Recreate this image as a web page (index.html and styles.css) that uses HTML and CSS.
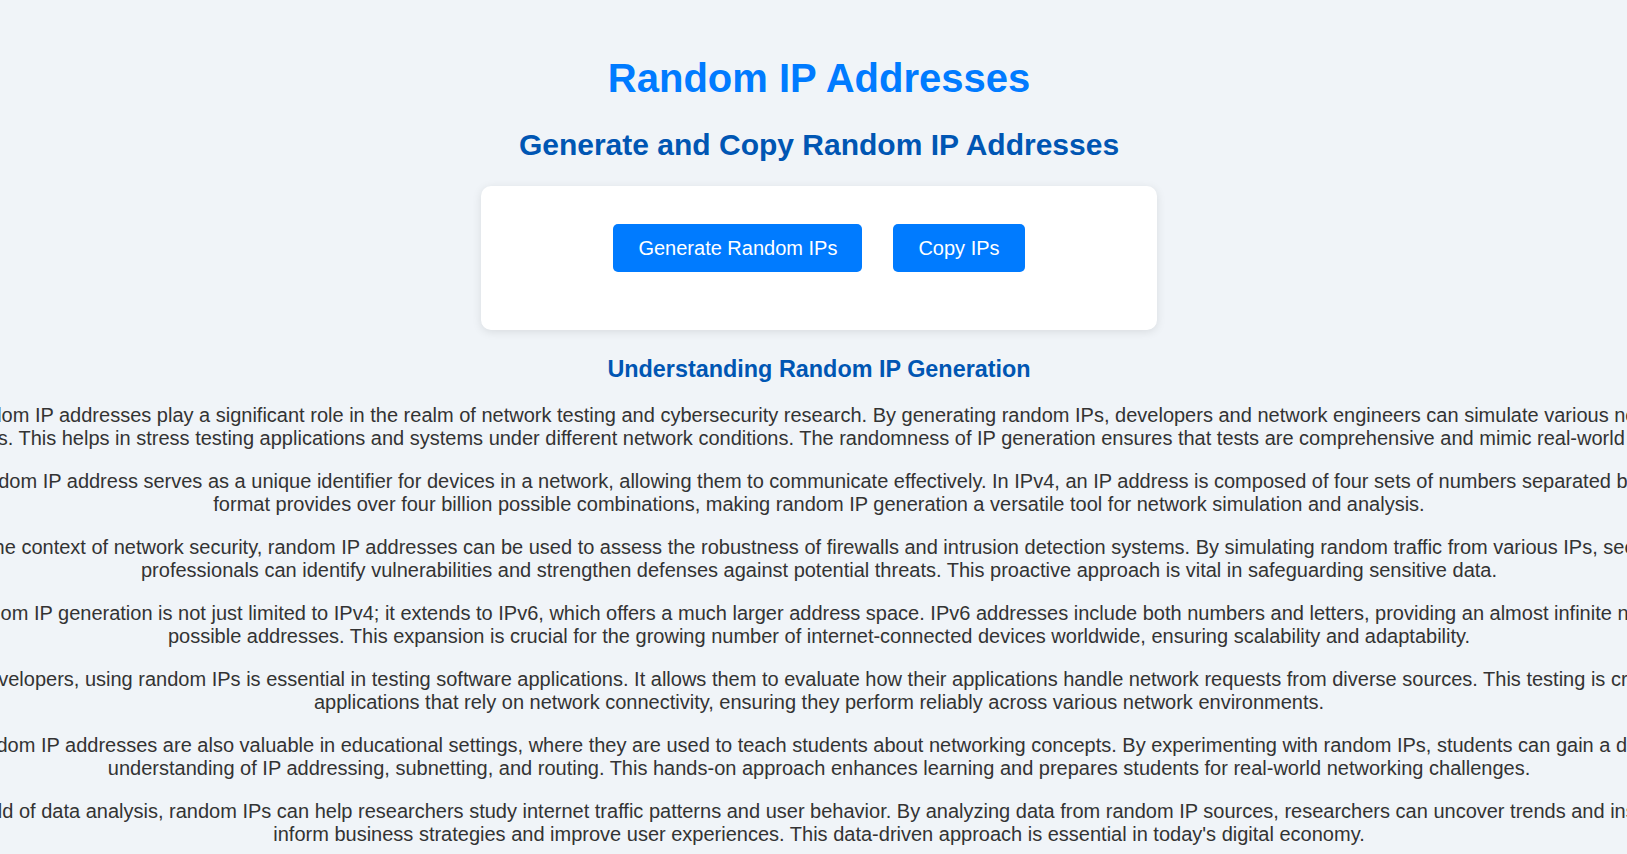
FILE: index.html
```html
<!DOCTYPE html>
<html lang="en">
<head>
    <meta charset="UTF-8">
    <meta name="viewport" content="width=device-width, initial-scale=1.0">
    <title>Random IP Addresses</title>
    <link rel="stylesheet" href="styles.css">
</head>
<body>
    <h1 class="title">Random IP Addresses</h1>
    <h2 class="subtitle">Generate and Copy Random IP Addresses</h2>

    <div class="generator">
        <div class="actions">
            <button class="btn" id="generate">Generate Random IPs</button>
            <button class="btn" id="copy">Copy IPs</button>
        </div>
        <div class="ip-list" id="ip-list"></div>
    </div>

    <section class="about">
        <h3>Understanding Random IP Generation</h3>
        <p>Random IP addresses play a significant role in the realm of network testing and cybersecurity research. By generating random IPs, developers and network engineers can simulate various network scenarios. This helps in stress testing applications and systems under different network conditions. The randomness of IP generation ensures that tests are comprehensive and mimic real-world networks.</p>
        <p>A random IP address serves as a unique identifier for devices in a network, allowing them to communicate effectively. In IPv4, an IP address is composed of four sets of numbers separated by dots. format provides over four billion possible combinations, making random IP generation a versatile tool for network simulation and analysis.</p>
        <p>In the context of network security, random IP addresses can be used to assess the robustness of firewalls and intrusion detection systems. By simulating random traffic from various IPs, security professionals can identify vulnerabilities and strengthen defenses against potential threats. This proactive approach is vital in safeguarding sensitive data.</p>
        <p>Random IP generation is not just limited to IPv4; it extends to IPv6, which offers a much larger address space. IPv6 addresses include both numbers and letters, providing an almost infinite number possible addresses. This expansion is crucial for the growing number of internet-connected devices worldwide, ensuring scalability and adaptability.</p>
        <p>For developers, using random IPs is essential in testing software applications. It allows them to evaluate how their applications handle network requests from diverse sources. This testing is crucial for applications that rely on network connectivity, ensuring they perform reliably across various network environments.</p>
        <p>Random IP addresses are also valuable in educational settings, where they are used to teach students about networking concepts. By experimenting with random IPs, students can gain a deeper understanding of IP addressing, subnetting, and routing. This hands-on approach enhances learning and prepares students for real-world networking challenges.</p>
        <p>In the field of data analysis, random IPs can help researchers study internet traffic patterns and user behavior. By analyzing data from random IP sources, researchers can uncover trends and insights that inform business strategies and improve user experiences. This data-driven approach is essential in today's digital economy.</p>
    </section>

    <script>
        const list = document.getElementById('ip-list');
        const generateBtn = document.getElementById('generate');
        const copyBtn = document.getElementById('copy');

        function randomOctet() {
            return Math.floor(Math.random() * 256);
        }

        function randomIp() {
            return [randomOctet(), randomOctet(), randomOctet(), randomOctet()].join('.');
        }

        generateBtn.addEventListener('click', () => {
            const ips = [];
            for (let i = 0; i < 10; i++) {
                ips.push(randomIp());
            }
            list.textContent = ips.join('\n');
        });

        copyBtn.addEventListener('click', () => {
            if (!list.textContent) return;
            navigator.clipboard.writeText(list.textContent);
        });
    </script>
</body>
</html>
```

FILE: styles.css
```css
html {
    overflow-x: hidden;
}

body {
    font-family: Arial, "Liberation Sans", sans-serif;
    font-size: 20px;
    margin: 0;
    padding: 29px 20px 20px 31px;
    background: #f0f4f8;
    color: #333;
    text-align: center;
    overflow-x: hidden;
}

.title {
    font-size: 40px;
    color: #007bff;
}

.subtitle {
    font-size: 30px;
    color: #0056b3;
}

.generator {
    width: 600px;
    margin: 0 auto;
    padding: 38px 38px 58px;
    background: #fff;
    border-radius: 10px;
    box-shadow: 0 2px 10px rgba(0, 0, 0, 0.1);
}

.actions {
    display: flex;
    justify-content: center;
    gap: 31px;
}

.btn {
    font-family: inherit;
    font-size: 20px;
    line-height: 24px;
    padding: 12px 25px;
    background: #007bff;
    color: #fff;
    border: none;
    border-radius: 5px;
    cursor: pointer;
}

.btn:hover {
    background: #0069d9;
}

.ip-list {
    white-space: pre-line;
    font-family: "Liberation Mono", monospace;
}

.ip-list:not(:empty) {
    margin-top: 20px;
}

/* wide text column, centred on the page */
.about {
    width: 1797px;
    margin-left: calc(50% - 898.5px);
}

.about h3 {
    margin: 26px 0 21px;
    color: #0056b3;
}
```
